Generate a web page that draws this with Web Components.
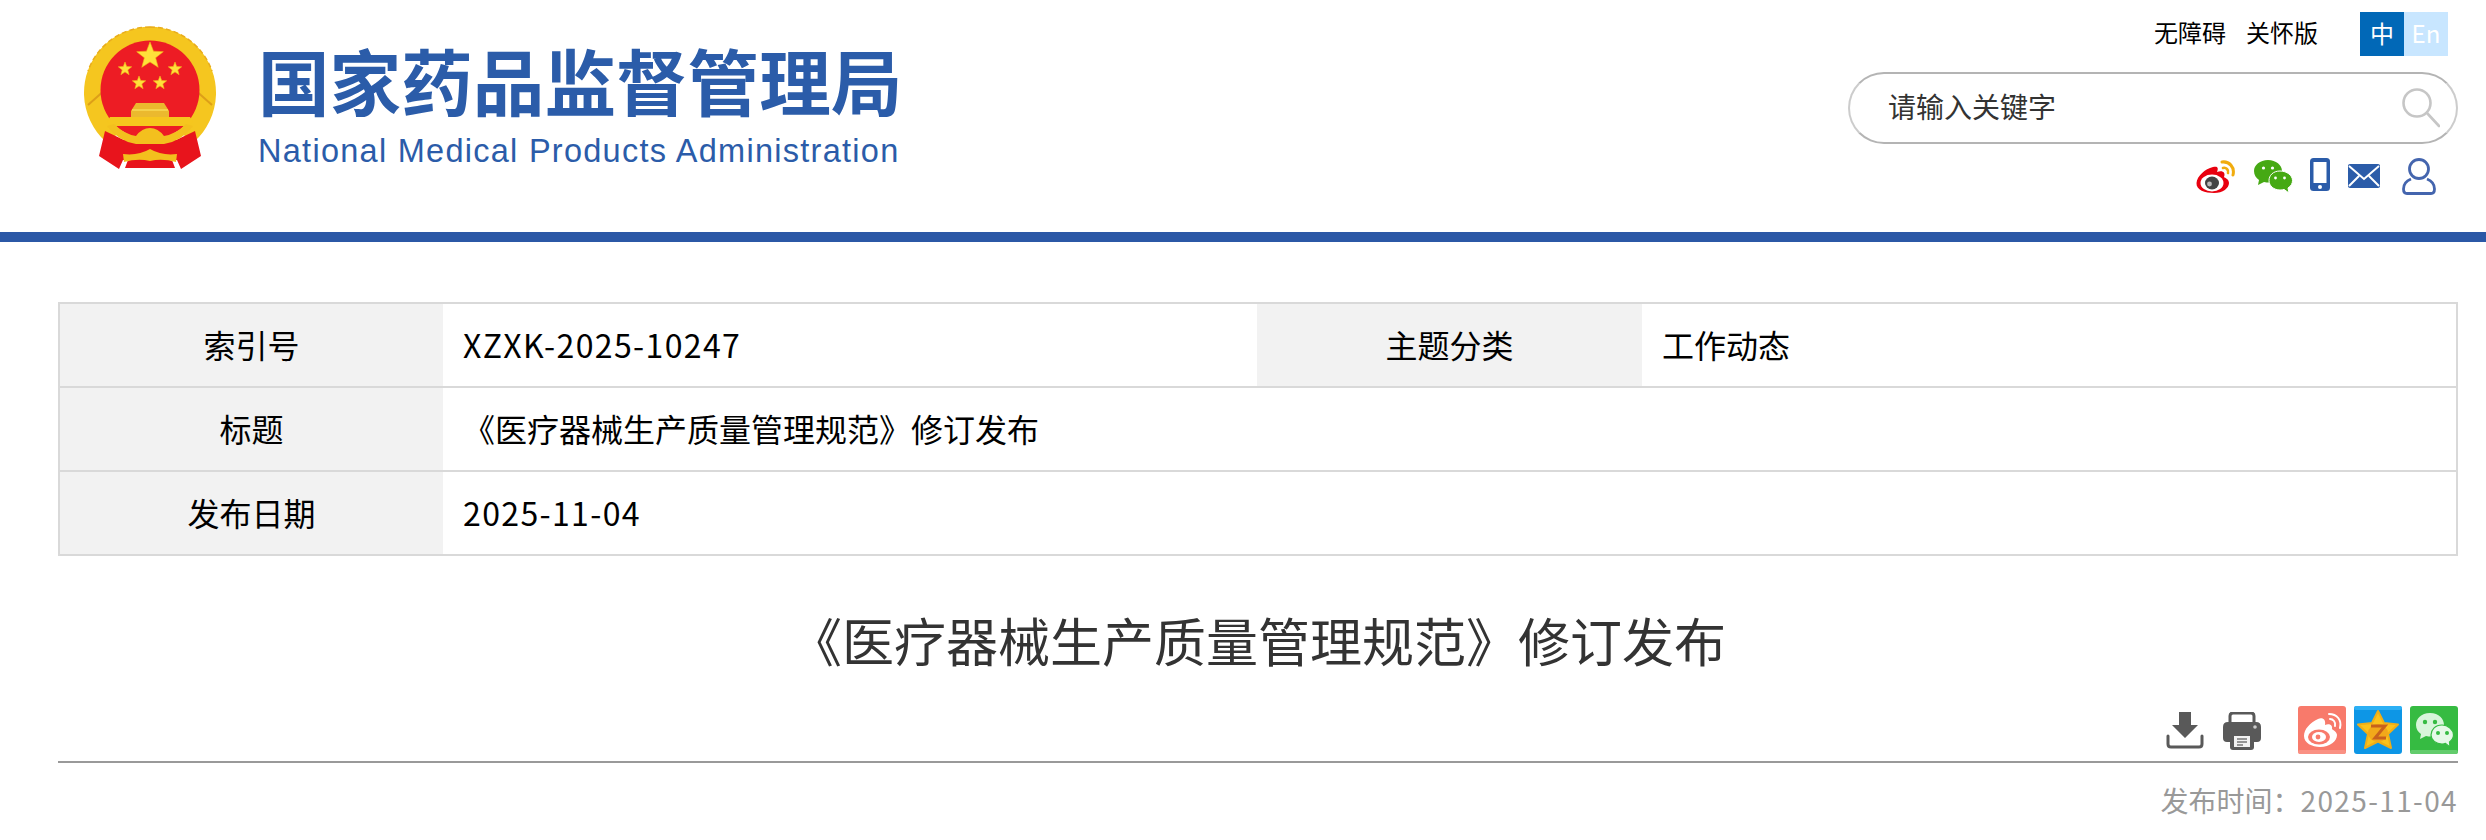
<!DOCTYPE html>
<html lang="zh-CN">
<head>
<meta charset="utf-8">
<title>《医疗器械生产质量管理规范》修订发布</title>
<style>
  html, body { margin: 0; padding: 0; background: #fff; }
  body { font-family: "Noto Sans CJK SC", "Liberation Sans", sans-serif; overflow: hidden; }
  .n { letter-spacing: 1.37px; }
</style>
</head>
<body>
<site-header></site-header>
<article-page>
  <info-table>
    <info-cell label>索引号</info-cell>
    <info-cell><span class="n">XZXK-2025-10247</span></info-cell>
    <info-cell label>主题分类</info-cell>
    <info-cell>工作动态</info-cell>
    <info-cell label>标题</info-cell>
    <info-cell wide>《医疗器械生产质量管理规范》修订发布</info-cell>
    <info-cell label last>发布日期</info-cell>
    <info-cell wide last><span class="n">2025-11-04</span></info-cell>
  </info-table>
  <article-title>《医疗器械生产质量管理规范》修订发布</article-title>
  <article-tools></article-tools>
  <article-meta>发布时间：<span class="n">2025-11-04</span></article-meta>
</article-page>

<script>
const FONT = `"Noto Sans CJK SC", "Liberation Sans", sans-serif`;

function star(cx, cy, r) {
    let pts = [];
    for (let i = 0; i < 10; i++) {
        const a = -Math.PI / 2 + i * Math.PI / 5;
        const d = i % 2 ? r * 0.42 : r;
        pts.push((cx + d * Math.cos(a)).toFixed(1) + ',' + (cy + d * Math.sin(a)).toFixed(1));
    }
    return pts.join(' ');
}

class SiteEmblem extends HTMLElement {
    constructor() {
        super();
        const stars = [[74, 38, 14], [49, 51, 7], [99, 51, 7], [63, 65, 7], [84, 65, 7]]
            .map(s => `<polygon points="${star(s[0], s[1], s[2])}" fill="#ffe03a" stroke="#f2b718" stroke-width=".6"/>`).join('');
        this.attachShadow({ mode: 'open' }).innerHTML = `
        <style>
          :host { display: block; width: 150px; height: 160px; flex: none; }
          svg { display: block; filter: blur(.6px); }
        </style>
        <svg width="150" height="160" viewBox="0 0 150 160">
          <path d="M30 124A66 66 0 1 1 118 124L100 112H48z" fill="#f5c61f"/>
          <path d="M74 9a66 66 0 0 1 62 44M74 9a66 66 0 0 0-62 44" fill="none" stroke="#e9ad1c" stroke-width="1.500" stroke-dasharray="5 3"/>
          <path d="M12 87l18-16M136 87l-18-16" stroke="#dd9f18" stroke-width="2"/>
          <circle cx="74" cy="72" r="49.500" fill="#ed1c24"/>
          ${stars}
          <path d="M60 85h28l5 8v6H55v-6z" fill="#ebb92e"/>
          <rect x="56" y="91" width="36" height="2" fill="#f5d24c"/>
          <path d="M29 113L23 138 43 151 47 142H101L105 151 125 138 119 113 100 122H48z" fill="#e8141c"/>
          <path d="M52 142H96L99 150H49z" fill="#e8141c"/>
          <path d="M34 99H114L117 104 112 108H36L31 104z" fill="#f6c61e"/>
          <path d="M31 108L38 106Q48 116 60 118 66 110 74 110 82 110 88 118 100 116 110 106L117 108Q106 123 88 126H60Q42 123 31 108z" fill="#f3c01e"/>
          <path d="M47 136Q62 138 74 131 86 138 101 136L100 144Q86 140 74 143 62 140 48 144z" fill="#f3bf1d"/>
        </svg>`;
    }
}
customElements.define('site-emblem', SiteEmblem);

class SiteLogo extends HTMLElement {
    constructor() {
        super();
        this.attachShadow({ mode: 'open' }).innerHTML = `
        <style>
          :host { display: flex; flex-direction: column; color: #2b5ca9; font-family: ${FONT}; }
          #cn { font-size: 71.6px; line-height: 76px; font-weight: 700; white-space: nowrap; }
          #en { font-family: "Liberation Sans", sans-serif; font-size: 32.5px; line-height: 40px; margin-top: 14px; white-space: nowrap; letter-spacing: 1.27px; }
        </style>
        <div id="cn">国家药品监督管理局</div>
        <div id="en">National Medical Products Administration</div>`;
    }
}
customElements.define('site-logo', SiteLogo);

class LangSwitch extends HTMLElement {
    constructor() {
        super();
        this.attachShadow({ mode: 'open' }).innerHTML = `
        <style>
          :host { display: flex; font-size: 24px; line-height: 42px; text-align: center; color: #fff; }
          span { display: block; width: 44px; height: 44px; }
          #zh { background: #0168b7; }
          #en { background: #c8e6ff; }
        </style>
        <span id="zh">中</span><span id="en">En</span>`;
    }
}
customElements.define('lang-switch', LangSwitch);

class SearchBox extends HTMLElement {
    constructor() {
        super();
        this.attachShadow({ mode: 'open' }).innerHTML = `
        <style>
          :host { display: flex; align-items: center; justify-content: space-between; box-sizing: border-box;
                  width: 610px; height: 72px; border: 2px solid #b4b4b4; border-left-color: #ccc; border-right-color: #ccc;
                  border-radius: 36px; padding: 0 16px 4px 38px; }
          span { font-size: 28px; color: #333; }
          svg { display: block; margin-top: 4px; }
        </style>
        <span>请输入关键字</span>
        <svg width="38" height="40" viewBox="0 0 38 40" fill="none" stroke="#c6c6c6" stroke-width="2.6">
          <circle cx="15" cy="15" r="13.5"/>
          <path d="M25 25l12 13" stroke-linecap="round"/>
        </svg>`;
    }
}
customElements.define('search-box', SearchBox);

class SocialIcons extends HTMLElement {
    constructor() {
        super();
        this.attachShadow({ mode: 'open' }).innerHTML = `
        <style>
          :host { display: flex; align-items: flex-start; height: 38px; }
          svg { display: block; flex: none; }
        </style>
        <!-- weibo -->
        <svg style="margin:2px 0 0 0" width="40" height="34" viewBox="0 0 40 34">
          <path d="M17 7C9 9 1 16 .5 23 0 30 9 33 18 33 27 33 33 28 33 23 33 19 29 18 28 17 30 12 26 10 21 12 23 7 21 6 17 7z" fill="#e8000f"/>
          <ellipse cx="16" cy="23" rx="11.5" ry="8.5" fill="#fff"/>
          <ellipse cx="16" cy="23" rx="7" ry="6.5" fill="#444"/>
          <circle cx="13.5" cy="24" r="2.4" fill="#bbb"/>
          <path d="M26 2C33 1 39 7 37 15" fill="none" stroke="#f1ac0e" stroke-width="3" stroke-linecap="round"/>
          <path d="M27 8C30 7 33 10 32 13" fill="none" stroke="#f1ac0e" stroke-width="2.6" stroke-linecap="round"/>
        </svg>
        <!-- wechat -->
        <svg style="margin:2px 0 0 18px" width="39" height="33" viewBox="0 0 39 33">
          <path d="M14 0C6 0 0 5 0 11 0 15 2 18 5 20L4 25 10 22C12 22.500 13 22.600 15 22.600 22 22.600 28 17.500 28 11 28 5 22 0 14 0z" fill="#46a914"/>
          <circle cx="9.500" cy="8" r="1.600" fill="#fff"/><circle cx="18.500" cy="8" r="1.600" fill="#fff"/>
          <path d="M26 11C19 11 15 15.500 15 20.500 15 26 20 30 26 30 27.500 30 29 29.800 30 29.400L35 33 34 28C37 26 38.500 23.500 38.500 20.500 38.500 15.500 33 11 26 11z" fill="#46a914" stroke="#fff" stroke-width="1"/>
          <circle cx="21.500" cy="18" r="1.400" fill="#fff"/><circle cx="30.500" cy="18" r="1.400" fill="#fff"/>
        </svg>
        <!-- phone -->
        <svg style="margin:0 0 0 17px" width="20" height="33" viewBox="0 0 20 33">
          <rect width="20" height="33" rx="3.500" fill="#2b5ca9"/>
          <rect x="3.500" y="4" width="13" height="21" fill="#fff"/>
          <circle cx="10" cy="29" r="2" fill="#fff"/>
        </svg>
        <!-- mail -->
        <svg style="margin:6px 0 0 18px" width="32" height="24" viewBox="0 0 32 24">
          <rect width="32" height="24" rx="2" fill="#2b5ca9"/>
          <path d="M1 2l15 13L31 2M1 22l10-10M31 22L21 12" fill="none" stroke="#fff" stroke-width="2"/>
        </svg>
        <!-- user -->
        <svg style="margin:0 0 0 22px" width="34" height="37" viewBox="0 0 34 37" fill="none" stroke="#4465ae" stroke-width="2.800">
          <circle cx="17" cy="11" r="9.500"/>
          <path d="M9 21C4 23 1.500 27 1.500 31 1.500 34 3 35.500 5 35.500H29C31 35.500 32.500 34 32.500 31 32.500 27 30 23 25 21"/>
        </svg>`;
    }
}
customElements.define('social-icons', SocialIcons);

class SiteHeader extends HTMLElement {
    constructor() {
        super();
        this.attachShadow({ mode: 'open' }).innerHTML = `
        <style>
          :host { display: flex; justify-content: space-between; box-sizing: border-box; height: 242px;
                  border-bottom: 10px solid #2b58a6; padding: 0 28px 0 76px; font-family: ${FONT}; }
          #brand { display: flex; align-items: flex-start; padding-top: 18px; }
          site-logo { margin: 23px 0 0 32px; }
          #tools { display: flex; flex-direction: column; align-items: flex-end; padding-top: 12px; }
          #links { display: flex; height: 44px; margin-right: 10px; font-size: 24px; line-height: 40px; color: #000; }
          #links a { margin-left: 20px; }
          lang-switch { margin-left: 42px; }
          search-box { margin-top: 16px; }
          social-icons { margin: 14px 22px 0 0; }
        </style>
        <div id="brand"><site-emblem></site-emblem><site-logo></site-logo></div>
        <div id="tools">
          <div id="links"><a>无障碍</a><a>关怀版</a><lang-switch></lang-switch></div>
          <search-box></search-box>
          <social-icons></social-icons>
        </div>`;
    }
}
customElements.define('site-header', SiteHeader);

class ArticlePage extends HTMLElement {
    constructor() {
        super();
        this.attachShadow({ mode: 'open' }).innerHTML = `
        <style>
          :host { display: block; padding: 60px 28px 0 58px; font-family: ${FONT}; }
        </style>
        <slot></slot>`;
    }
}
customElements.define('article-page', ArticlePage);

class InfoTable extends HTMLElement {
    constructor() {
        super();
        this.attachShadow({ mode: 'open' }).innerHTML = `
        <style>
          :host { display: grid; grid-template-columns: 383px 814px 385px 1fr; grid-auto-rows: auto;
                  border: 2px solid #d9d9d9; }
        </style>
        <slot></slot>`;
    }
}
customElements.define('info-table', InfoTable);

class InfoCell extends HTMLElement {
    constructor() {
        super();
        this.attachShadow({ mode: 'open' }).innerHTML = `
        <style>
          :host { display: flex; align-items: center; box-sizing: border-box; height: 84px; padding: 0 20px 2px;
                  border-bottom: 2px solid #d9d9d9; font-size: 32px; color: #000; white-space: nowrap; }
          :host([label]) { justify-content: center; background: #f2f2f2; padding: 0 0 2px; }
          :host([wide]) { grid-column: span 3; }
          :host([last]) { border-bottom: 0; height: 82px; }
        </style>
        <slot></slot>`;
    }
}
customElements.define('info-cell', InfoCell);

class ArticleTitle extends HTMLElement {
    constructor() {
        super();
        this.attachShadow({ mode: 'open' }).innerHTML = `
        <style>
          :host { display: block; margin-top: 42px; font-size: 52px; line-height: 84px; text-align: center; color: #333; }
        </style>
        <slot></slot>`;
    }
}
customElements.define('article-title', ArticleTitle);

class ArticleTools extends HTMLElement {
    constructor() {
        super();
        this.attachShadow({ mode: 'open' }).innerHTML = `
        <style>
          :host { display: flex; justify-content: flex-end; align-items: flex-start; box-sizing: border-box; height: 59px; margin-top: 22px;
                  padding-top: 2px; border-bottom: 2px solid #999; }
          svg { display: block; flex: none; }
          .sq { width: 48px; height: 48px; margin-left: 8px; }
        </style>
        <!-- download -->
        <svg style="margin-top:6px" width="38" height="37" viewBox="0 0 38 37">
          <path d="M13 0h12v13h7L19 26 6 13h7z" fill="#595959"/>
          <path d="M2 24v8q0 3 3 3h28q3 0 3-3v-8" fill="none" stroke="#595959" stroke-width="3" stroke-linecap="round"/>
        </svg>
        <!-- print -->
        <svg style="margin:6px 37px 0 19px" width="38" height="38" viewBox="0 0 38 38">
          <path d="M7 11V4q0-3 3-3h18q3 0 3 3v7" fill="none" stroke="#595959" stroke-width="3"/>
          <path d="M5 10h28q5 0 5 5v11q0 4-4 4h-3v-8H7v8H4q-4 0-4-4V15q0-5 5-5z" fill="#595959"/>
          <circle cx="32" cy="15" r="1.800" fill="#ccc"/>
          <path d="M7 21h24v14q0 3-3 3H10q-3 0-3-3z" fill="#595959"/>
          <path d="M11 24h16v11H11z" fill="#f2f2f2"/>
          <path d="M14 27h10M14 30h10M14 33h6" stroke="#777" stroke-width="1.600"/>
        </svg>
        <!-- share weibo -->
        <svg class="sq" style="margin-left:0" viewBox="0 0 48 48">
          <rect width="48" height="48" rx="3" fill="#f87a6b"/>
          <rect y="44" width="48" height="4" rx="2" fill="#fa9184"/>
          <path d="M20 13C12 17 6 23 6 30 6 37 14 41 22 41 32 41 39 35 39 29 39 26 35 24 34 23 35 19 31 17 27 19 28 14 25 11 20 13z" fill="#fff"/>
          <ellipse cx="21" cy="31" rx="11" ry="7.500" fill="#f87a6b"/>
          <ellipse cx="21" cy="31" rx="7" ry="5" fill="#fff"/>
          <circle cx="20" cy="31" r="2.400" fill="#f87a6b"/>
          <path d="M31 8C39 8 44 14 42 22M32 13C35 13 38 16 37 20" fill="none" stroke="#fff" stroke-width="2" stroke-linecap="round"/>
        </svg>
        <!-- share qzone -->
        <svg class="sq" viewBox="0 0 48 48">
          <rect width="48" height="48" rx="3" fill="#0d96e6"/>
          <rect width="48" height="4" rx="2" fill="#2cb0f5"/>
          <polygon points="24,5 30,17 44,18.500 34,28 37,42 24,35.500 11,42 14,28 4,18.500 18,17" fill="#fbc21c" stroke="#f0ae16" stroke-width="2" stroke-linejoin="round"/>
          <ellipse cx="24" cy="27" rx="10" ry="9" fill="#f2a81a"/>
          <path d="M17 20h14l-10 12h11" fill="none" stroke="#c8611c" stroke-width="3"/>
        </svg>
        <!-- share wechat -->
        <svg class="sq" viewBox="0 0 48 48">
          <rect width="48" height="48" rx="3" fill="#36bb42"/>
          <rect y="44" width="48" height="4" rx="2" fill="#63cc6c"/>
          <path d="M20 7C11 7 6 13 6 19 6 23 8 26 11 28L10 33 16 30C18 30.500 19 30.600 20 30.600 28 30.600 34 25 34 19 34 13 29 7 20 7z" fill="#d8f5da"/>
          <circle cx="15" cy="16" r="2.200" fill="#36bb42"/><circle cx="25" cy="16" r="2.200" fill="#36bb42"/>
          <path d="M32 19C25 19 21 24 21 29 21 34 26 38 32 38 33.500 38 34.500 37.800 35.500 37.400L40 41 39.500 36C42 34 43.500 32 43.500 29 43.500 24 38 19 32 19z" fill="#e6f9e8" stroke="#36bb42" stroke-width="1.200"/>
          <circle cx="28" cy="27" r="2" fill="#36bb42"/><circle cx="37" cy="27" r="2" fill="#36bb42"/>
        </svg>`;
    }
}
customElements.define('article-tools', ArticleTools);

class ArticleMeta extends HTMLElement {
    constructor() {
        super();
        this.attachShadow({ mode: 'open' }).innerHTML = `
        <style>
          :host { display: block; margin-top: 17px; font-size: 28px; line-height: 40px; text-align: right; color: #999; }
        </style>
        <slot></slot>`;
    }
}
customElements.define('article-meta', ArticleMeta);
</script>
</body>
</html>
